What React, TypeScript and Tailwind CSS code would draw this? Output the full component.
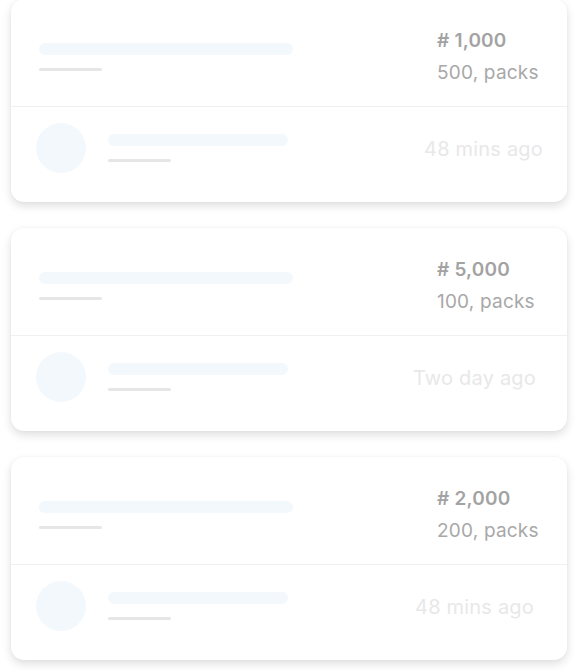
import React from "react";

type CardProps = {
  amount: string;
  packs: string;
  time: string;
  timePr: string;
};

function Card({ amount, packs, time, timePr }: CardProps) {
  return (
    <div className="bg-white rounded-[13px] shadow-[0_4px_10px_rgba(0,0,0,0.13),0_0_3px_rgba(0,0,0,0.04)] overflow-hidden">
      <div className="flex items-start h-[108px] border-b border-[#f0f0f0]">
        <div className="ml-[28px] mt-[44px] flex flex-col">
          <div className="w-[254px] h-[12px] rounded-full bg-[#f3f8fd]" />
          <div className="mt-[13px] w-[63px] h-[3px] rounded-full bg-[#e6e6e6]" />
        </div>
        <div className="ml-auto w-[130px] mt-[26px] flex flex-col text-[19px] leading-[32px] tracking-[0.2px]">
          <div className="font-semibold text-[#a3a3a3]">{amount}</div>
          <div className="text-[#a8a8a8]">{packs}</div>
        </div>
      </div>
      <div className="flex items-start h-[95px] pt-[16px]">
        <div className="ml-[25px] w-[50px] h-[50px] rounded-full bg-[#f3f8fd]" />
        <div className="ml-[22px] mt-[11px] flex flex-col">
          <div className="w-[180px] h-[12px] rounded-full bg-[#f3f8fd]" />
          <div className="mt-[13px] w-[63px] h-[3px] rounded-full bg-[#e6e6e6]" />
        </div>
        <div className={`ml-auto mt-[10px] text-[20px] leading-[32px] tracking-[0.2px] text-[#e8e8e8] ${timePr}`}>
          {time}
        </div>
      </div>
    </div>
  );
}

export default function App() {
  return (
    <div
      className="min-h-[672px] bg-white"
      style={{ fontFamily: "Inter, 'Liberation Sans', sans-serif" }}
    >
      <div className="mt-[-1px] px-[11px] w-[578px] flex flex-col gap-[26px]">
        <Card amount="# 1,000" packs="500, packs" time="48 mins ago" timePr="pr-[24px]" />
        <Card amount="# 5,000" packs="100, packs" time="Two day ago" timePr="pr-[31px]" />
        <Card amount="# 2,000" packs="200, packs" time="48 mins ago" timePr="pr-[33px]" />
      </div>
    </div>
  );
}
